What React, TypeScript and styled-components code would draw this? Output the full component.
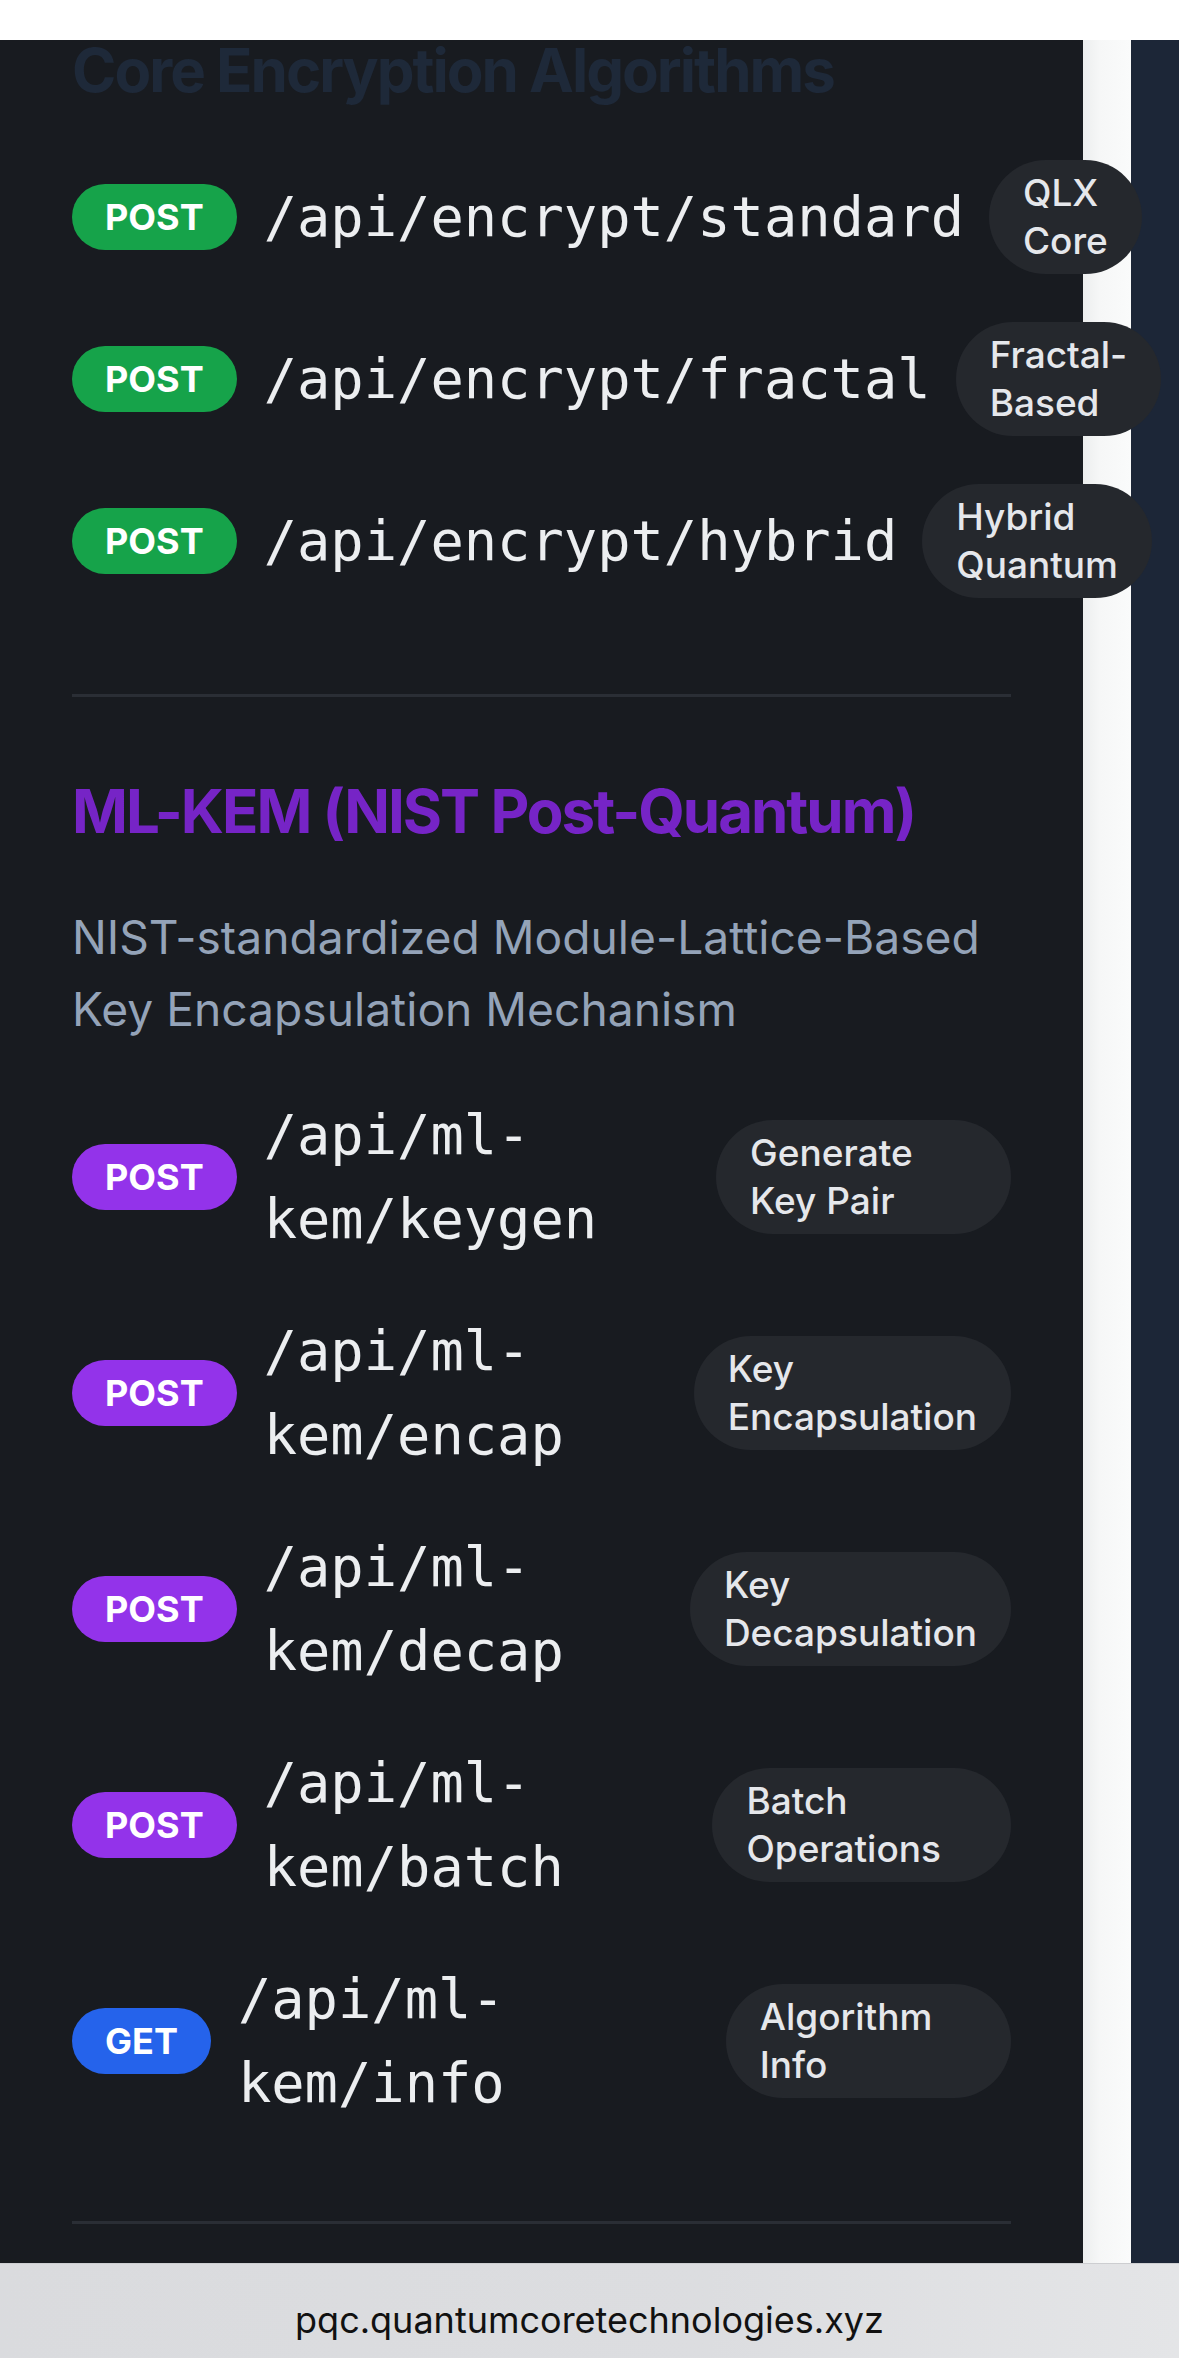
import React from 'react';
import styled, { createGlobalStyle } from 'styled-components';

const GlobalStyle = createGlobalStyle`
  html, body {
    margin: 0;
    padding: 0;
    background: #181b20;
  }
  body {
    font-family: Inter, "Noto Sans", sans-serif;
    overflow: hidden;
  }
  * {
    box-sizing: border-box;
  }
`;

const Page = styled.div`
  display: flex;
  width: 100%;
  height: 2358px;
`;

const Panel = styled.main`
  position: relative;
  z-index: 1;
  flex: 0 0 1083px;
  width: 1083px;
  min-width: 0;
  background: #181b20;
  padding: 28px 72px 0;
`;

const LightStrip = styled.div`
  flex: 0 0 48px;
  background: linear-gradient(90deg, #eceeee 0%, #f6f7f7 35%, #fafbfb 100%);
`;

const NavyStrip = styled.div`
  flex: 1 1 auto;
  background: #1c2637;
`;

const Section = styled.section<{ $divider?: boolean }>`
  border-top: ${(p) => (p.$divider ? '3px solid #2a2e35' : 'none')};
  padding-top: ${(p) => (p.$divider ? '72px' : '0')};
`;

const Heading = styled.h2<{ $color: string }>`
  margin: 0 0 48px;
  font-family: Inter, "Noto Sans", sans-serif;
  font-weight: 700;
  font-size: 60px;
  line-height: 84px;
  letter-spacing: -2px;
  color: ${(p) => p.$color};
`;

const Description = styled.p`
  margin: 0 0 48px;
  font-family: Inter, "Noto Sans", sans-serif;
  font-weight: 400;
  font-size: 46.2px;
  line-height: 72px;
  color: #94a3b8;
`;

const EndpointList = styled.div`
  display: flex;
  flex-direction: column;
  gap: 48px;
  margin-bottom: 96px;
`;

const Row = styled.div`
  display: flex;
  align-items: center;
  justify-content: space-between;
  gap: 25px;
`;

const Lead = styled.div`
  display: flex;
  align-items: center;
  gap: 27px;
`;

const methodColors: Record<string, string> = {
  green: '#16a34a',
  purple: '#9333ea',
  blue: '#2563eb',
};

const Method = styled.span<{ $variant: 'green' | 'purple' | 'blue' }>`
  flex-shrink: 0;
  display: inline-block;
  padding: 0 33px;
  border-radius: 999px;
  background: ${(p) => methodColors[p.$variant]};
  color: #ffffff;
  font-family: Inter, "Noto Sans", sans-serif;
  font-weight: 700;
  font-size: 36px;
  line-height: 66px;
`;

const Path = styled.code`
  font-family: "DejaVu Sans Mono", "Liberation Mono", monospace;
  font-weight: 400;
  font-size: 55.4px;
  line-height: 84px;
  color: #eceef0;
`;

const Tag = styled.span`
  display: block;
  flex-shrink: 1.3;
  padding: 9px 34px;
  border-radius: 999px;
  background: #25282d;
  color: #e5e7eb;
  font-family: Inter, "Noto Sans", sans-serif;
  font-weight: 500;
  font-size: 37px;
  line-height: 48px;
`;

const TopBar = styled.div`
  position: fixed;
  top: 0;
  left: 0;
  right: 0;
  height: 40px;
  background: #ffffff;
  z-index: 10;
`;

const AddressBar = styled.footer`
  position: fixed;
  left: 0;
  right: 0;
  bottom: 0;
  height: 95px;
  z-index: 10;
  display: flex;
  justify-content: center;
  padding-top: 34px;
  background: linear-gradient(90deg, #dadbde 0%, #dcdde0 60%, #e4e5e7 100%);
  border-top: 1px solid #cdced1;
  font-family: Inter, "Noto Sans", sans-serif;
  font-weight: 400;
  font-size: 36px;
  line-height: 44px;
  color: #111111;
`;

type Endpoint = {
  method: 'POST' | 'GET';
  variant: 'green' | 'purple' | 'blue';
  path: string;
  tag: string;
};

const coreEndpoints: Endpoint[] = [
  { method: 'POST', variant: 'green', path: '/api/encrypt/standard', tag: 'QLX Core' },
  { method: 'POST', variant: 'green', path: '/api/encrypt/fractal', tag: 'Fractal-Based' },
  { method: 'POST', variant: 'green', path: '/api/encrypt/hybrid', tag: 'Hybrid Quantum' },
];

const mlKemEndpoints: Endpoint[] = [
  { method: 'POST', variant: 'purple', path: '/api/ml-kem/keygen', tag: 'Generate Key Pair' },
  { method: 'POST', variant: 'purple', path: '/api/ml-kem/encap', tag: 'Key Encapsulation' },
  { method: 'POST', variant: 'purple', path: '/api/ml-kem/decap', tag: 'Key Decapsulation' },
  { method: 'POST', variant: 'purple', path: '/api/ml-kem/batch', tag: 'Batch Operations' },
  { method: 'GET', variant: 'blue', path: '/api/ml-kem/info', tag: 'Algorithm Info' },
];

function EndpointRows({ items }: { items: Endpoint[] }) {
  return (
    <EndpointList>
      {items.map((e) => (
        <Row key={e.path}>
          <Lead>
            <Method $variant={e.variant}>{e.method}</Method>
            <Path>{e.path}</Path>
          </Lead>
          <Tag>{e.tag}</Tag>
        </Row>
      ))}
    </EndpointList>
  );
}

export default function App() {
  return (
    <>
      <GlobalStyle />
      <TopBar />
      <Page>
        <Panel>
          <Section>
            <Heading $color="#1e2939">Core Encryption Algorithms</Heading>
            <EndpointRows items={coreEndpoints} />
          </Section>
          <Section $divider>
            <Heading $color="#7624c6">ML-KEM (NIST Post-Quantum)</Heading>
            <Description>
              NIST-standardized Module-Lattice-Based Key Encapsulation Mechanism
            </Description>
            <EndpointRows items={mlKemEndpoints} />
          </Section>
          <Section $divider />
        </Panel>
        <LightStrip />
        <NavyStrip />
      </Page>
      <AddressBar>pqc.quantumcoretechnologies.xyz</AddressBar>
    </>
  );
}
